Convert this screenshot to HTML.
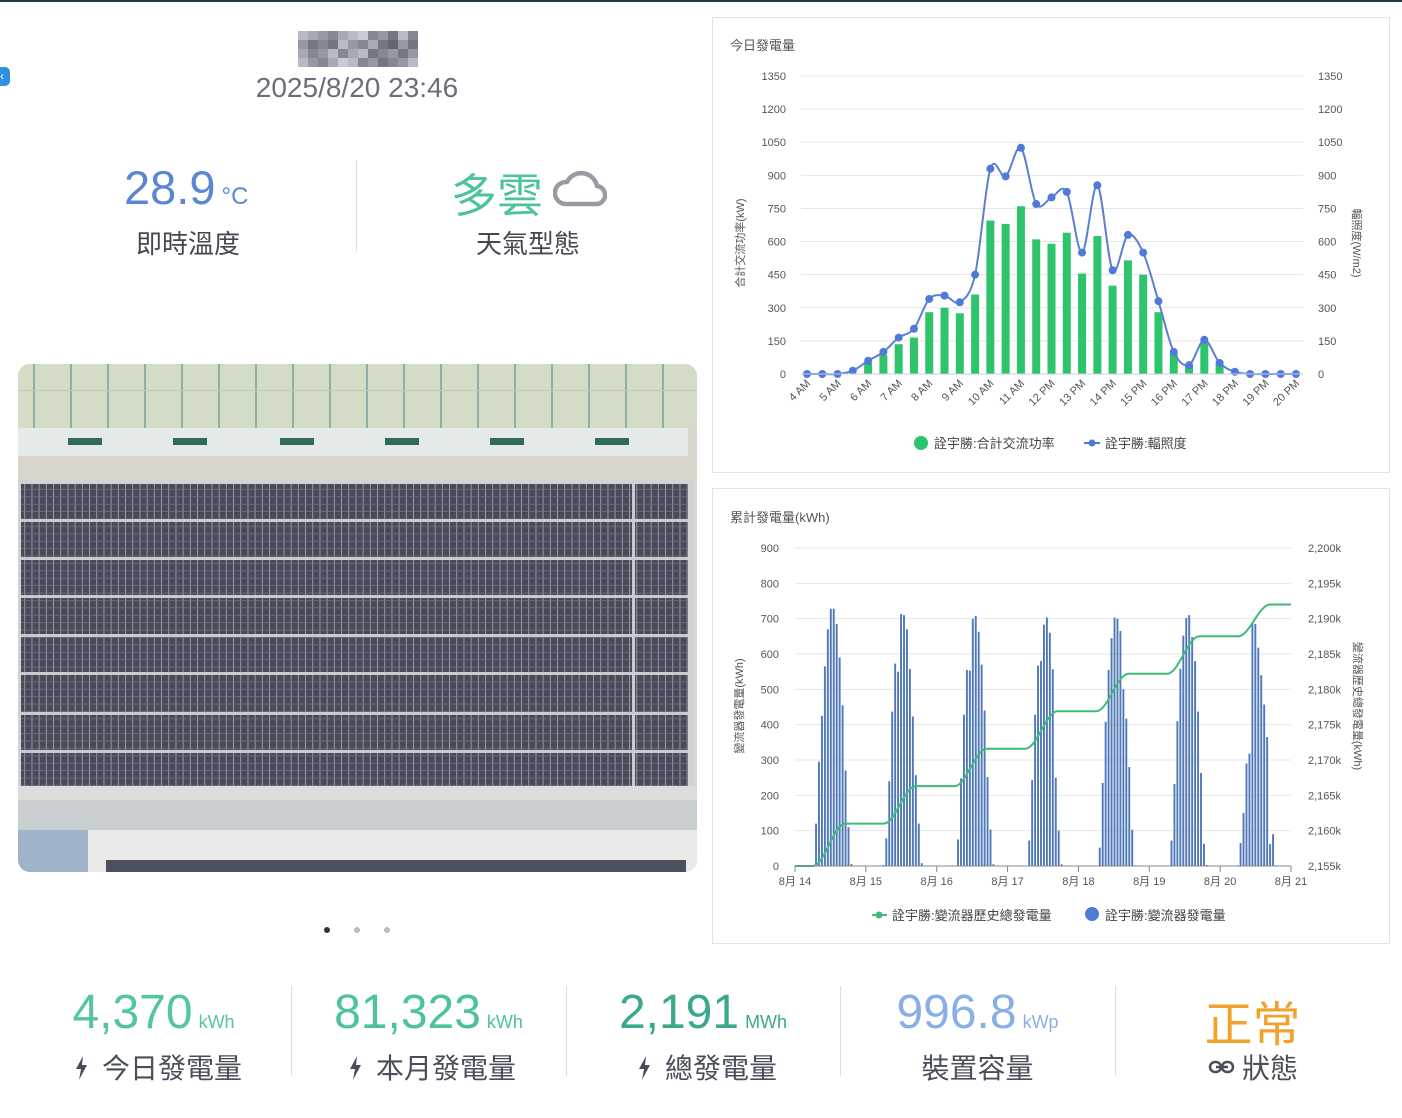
<!DOCTYPE html>
<html><head><meta charset="utf-8">
<style>
*{margin:0;padding:0;box-sizing:border-box}
body{width:1402px;height:1118px;background:#fff;font-family:"Liberation Sans","Noto Sans CJK TC",sans-serif;position:relative;overflow:hidden;color:#555}
.abs{position:absolute}
.card{position:absolute;border:1px solid #e3e3e3;background:#fff}
.t{position:absolute;white-space:nowrap}
</style></head><body>
<div class="abs" style="left:0;top:0;width:1402px;height:2px;background:#223c45"></div>
<div class="abs" style="left:0;top:67px;width:10px;height:19px;background:#2f8fe0;border-radius:0 5px 5px 0;color:#fff;font-size:12px;line-height:19px;text-align:left;padding-left:0px">‹</div>

<div id="blur" class="abs" style="left:298px;top:31px;width:120px;height:36px"></div>
<div class="t" style="left:0;width:714px;top:72px;text-align:center;font-size:28px;color:#6b6e7a">2025/8/20 23:46</div>

<div class="t" style="left:124px;top:160px;font-size:47px;color:#5b86d6">28.9<span style="font-size:24px;margin-left:6px">°C</span></div>
<div class="t" style="left:0;width:376px;top:224px;text-align:center;font-size:26px;color:#454851">即時溫度</div>
<div class="abs" style="left:356px;top:160px;width:1px;height:91px;background:#ddd"></div>
<div class="t" style="left:451px;top:160px;font-size:46px;color:#4cc39a">多雲</div>
<svg class="abs" style="left:553px;top:168px" width="54" height="40" viewBox="0 0 54 40"><path d="M12 36 H42 A9 9 0 0 0 44 18 A16 16 0 0 0 14 14 A11 11 0 0 0 12 36 Z" fill="none" stroke="#9a9aa2" stroke-width="4.5" stroke-linejoin="round"/></svg>
<div class="t" style="left:340px;width:376px;top:224px;text-align:center;font-size:26px;color:#454851">天氣型態</div>

<div class="abs" style="left:18px;top:364px;width:679px;height:508px;border-radius:12px;overflow:hidden"><svg id="photo" width="679" height="508"></svg></div>
<div class="abs" style="left:324px;top:927px;width:6px;height:6px;border-radius:3px;background:#333"></div>
<div class="abs" style="left:354px;top:927px;width:6px;height:6px;border-radius:3px;background:#bbb"></div>
<div class="abs" style="left:384px;top:927px;width:6px;height:6px;border-radius:3px;background:#bbb"></div>

<div class="card" style="left:712px;top:17px;width:678px;height:456px"><svg id="c1" width="678" height="456"></svg></div>
<div class="card" style="left:712px;top:488px;width:678px;height:456px"><svg id="c2" width="678" height="456"></svg></div>

<div class="abs" style="left:291px;top:986px;width:1px;height:90px;background:#ddd"></div>
<div class="abs" style="left:566px;top:986px;width:1px;height:90px;background:#ddd"></div>
<div class="abs" style="left:840px;top:986px;width:1px;height:90px;background:#ddd"></div>
<div class="abs" style="left:1115px;top:986px;width:1px;height:90px;background:#ddd"></div>

<div class="t" style="left:16px;width:275px;top:985px;text-align:center;font-size:48px;color:#55c4a0">4,370<span style="font-size:18px;margin-left:6px">kWh</span></div>
<div class="t" style="left:291px;width:275px;top:985px;text-align:center;font-size:48px;color:#4cc29d">81,323<span style="font-size:18px;margin-left:6px">kWh</span></div>
<div class="t" style="left:566px;width:274px;top:985px;text-align:center;font-size:48px;color:#3aa88a">2,191<span style="font-size:18px;margin-left:6px">MWh</span></div>
<div class="t" style="left:840px;width:275px;top:985px;text-align:center;font-size:48px;color:#8aaee6">996.8<span style="font-size:18px;margin-left:6px">kWp</span></div>
<div class="t" style="left:1115px;width:275px;top:985px;text-align:center;font-size:48px;color:#f0a22a">正常</div>

<svg class="abs" style="left:74px;top:1055px" width="16" height="26" viewBox="0 0 16 26"><path d="M9 1 L2 14 H7 L5 25 L13 10 H8 Z" fill="#4a4e5a"/></svg>
<div class="t" style="left:102px;top:1047px;font-size:28px;color:#4a4e5a">今日發電量</div>
<svg class="abs" style="left:348px;top:1055px" width="16" height="26" viewBox="0 0 16 26"><path d="M9 1 L2 14 H7 L5 25 L13 10 H8 Z" fill="#4a4e5a"/></svg>
<div class="t" style="left:376px;top:1047px;font-size:28px;color:#4a4e5a">本月發電量</div>
<svg class="abs" style="left:637px;top:1055px" width="16" height="26" viewBox="0 0 16 26"><path d="M9 1 L2 14 H7 L5 25 L13 10 H8 Z" fill="#4a4e5a"/></svg>
<div class="t" style="left:665px;top:1047px;font-size:28px;color:#4a4e5a">總發電量</div>
<div class="t" style="left:840px;width:275px;top:1047px;text-align:center;font-size:28px;color:#4a4e5a">裝置容量</div>
<svg class="abs" style="left:1208px;top:1058px" width="28" height="18" viewBox="0 0 28 18"><rect x="2" y="4" width="11" height="10" rx="5" fill="none" stroke="#4a4e5a" stroke-width="2.5"/><rect x="14" y="4" width="11" height="10" rx="5" fill="none" stroke="#4a4e5a" stroke-width="2.5"/><line x1="8" y1="9" x2="20" y2="9" stroke="#4a4e5a" stroke-width="2.5"/></svg>
<div class="t" style="left:1242px;top:1047px;font-size:28px;color:#4a4e5a">狀態</div>

<script>
var NS="http://www.w3.org/2000/svg";
function el(p,tag,a,txt){var e=document.createElementNS(NS,tag);for(var k in a)e.setAttribute(k,a[k]);if(txt!==undefined)e.textContent=txt;p.appendChild(e);return e;}
(function(){var b=document.getElementById('blur');var g=[
"ccbbaa99bbccdd99aa88cc99",
"aa889988ccaa99bb8877aa88",
"bb99aacc99bbcc8899aa88aa",
"ccaa99bbddcc99aa8899aacc"];
for(var r=0;r<4;r++)for(var c=0;c<12;c++){var h=g[r].substr(c*2,2);var v=parseInt(h,16);var d=document.createElement('div');d.style.cssText='position:absolute;left:'+c*10+'px;top:'+r*9+'px;width:10px;height:9px;background:rgb('+(v-20)+','+(v-18)+','+(v-5)+')';b.appendChild(d);}})();

(function(){var s=document.getElementById('photo');
el(s,'rect',{x:0,y:0,width:679,height:508,fill:'#d8d6cf'});
el(s,'rect',{x:0,y:0,width:679,height:64,fill:'#d3dcc6'});
for(var x=15;x<679;x+=37)el(s,'rect',{x:x,y:0,width:2,height:64,fill:'#8fb0a8'});
el(s,'rect',{x:0,y:26,width:679,height:1,fill:'#bfcab8'});
el(s,'rect',{x:0,y:64,width:670,height:28,fill:'#e6e9ea'});
[50,155,262,367,472,577].forEach(function(x){el(s,'rect',{x:x,y:74,width:34,height:7,fill:'#2f6a5a'});});
el(s,'rect',{x:0,y:92,width:679,height:24,fill:'#d9d6cc'});
el(s,'rect',{x:0,y:116,width:676,height:310,fill:'#d0d3d6'});
var d=el(s,'defs',{});var p=el(d,'pattern',{id:'cell',width:7.2,height:7.4,patternUnits:'userSpaceOnUse'});
el(p,'rect',{width:7.2,height:7.4,fill:'#464a59'});
el(p,'rect',{x:6.3,width:0.9,height:7.4,fill:'#9ea2ae'});el(p,'rect',{y:6.7,width:7.2,height:0.7,fill:'#737786'});
el(s,'rect',{x:3,y:120,width:667,height:302,fill:'url(#cell)'});
[155,193,231,270,308,348,386].forEach(function(y){el(s,'rect',{x:3,y:y,width:667,height:3,fill:'#c8cbd0'});});
el(s,'rect',{x:614,y:120,width:3,height:302,fill:'#c8cbd0'});
el(s,'rect',{x:0,y:422,width:679,height:14,fill:'#dcdcda'});
el(s,'rect',{x:0,y:436,width:679,height:30,fill:'#c9cfd0'});
el(s,'rect',{x:0,y:466,width:70,height:42,fill:'#9fb3c9'});
el(s,'rect',{x:70,y:466,width:609,height:42,fill:'#eaeae8'});
el(s,'rect',{x:88,y:496,width:580,height:12,fill:'#4b4f5e'});
})();

function smooth(pts){var d='M'+pts[0][0]+' '+pts[0][1];for(var i=0;i<pts.length-1;i++){var p0=pts[i-1]||pts[i],p1=pts[i],p2=pts[i+1],p3=pts[i+2]||p2;var t=0.16;d+=' C'+(p1[0]+(p2[0]-p0[0])*t)+' '+(p1[1]+(p2[1]-p0[1])*t)+' '+(p2[0]-(p3[0]-p1[0])*t)+' '+(p2[1]-(p3[1]-p1[1])*t)+' '+p2[0]+' '+p2[1];}return d;}

(function(){var s=document.getElementById('c1');var ox=712,oy=17;
el(s,'text',{x:17,y:32,'font-size':13,fill:'#555'},'今日發電量');
var y0=373-oy,k=298/1350;
for(var v=0;v<=1350;v+=150){var y=y0-v*k;el(s,'line',{x1:800-ox,x2:1302-ox,y1:y,y2:y,stroke:'#e6e6e6'});
el(s,'text',{x:785-ox,y:y+4,'font-size':11,fill:'#555','text-anchor':'end'},v);
el(s,'text',{x:1317-ox,y:y+4,'font-size':11,fill:'#555'},v);}
var irr=[0,0,0,15,60,100,165,205,340,355,325,450,930,895,1025,770,800,825,550,855,470,630,550,330,100,40,155,50,10,0,0,0,0];
var bar=[0,0,0,0,50,85,135,165,280,300,275,360,695,680,760,610,590,640,455,625,400,515,450,280,95,40,140,45,0,0,0,0,0];
var sp=(1295-806)/32;
for(var i=0;i<33;i++){var x=806-ox+i*sp;if(bar[i]>0)el(s,'rect',{x:x-4,y:y0-bar[i]*k,width:8,height:bar[i]*k,fill:'#2ec46b'});}
var pts=irr.map(function(v,i){return[806-ox+i*sp,y0-v*k];});
el(s,'path',{d:smooth(pts),fill:'none',stroke:'#5b80d0','stroke-width':2});
pts.forEach(function(p){el(s,'circle',{cx:p[0],cy:p[1],r:4,fill:'#4f7ad8'});});
el(s,'line',{x1:800-ox,x2:1302-ox,y1:y0,y2:y0,stroke:'#ccd'});
var lab=['4 AM','5 AM','6 AM','7 AM','8 AM','9 AM','10 AM','11 AM','12 PM','13 PM','14 PM','15 PM','16 PM','17 PM','18 PM','19 PM','20 PM'];
lab.forEach(function(l,i){var x=806-ox+i*2*sp+4,y=y0+10;el(s,'text',{x:x,y:y,'font-size':11,fill:'#555','text-anchor':'end',transform:'rotate(-45 '+x+' '+y+')'},l);});
el(s,'text',{x:31,y:225,'font-size':11,fill:'#555','text-anchor':'middle',transform:'rotate(-90 31 225)'},'合計交流功率(kW)');
el(s,'text',{x:640,y:225,'font-size':11,fill:'#555','text-anchor':'middle',transform:'rotate(90 640 225)'},'輻照度(W/m2)');
el(s,'circle',{cx:920-ox,cy:442-oy,r:7,fill:'#2ec46b'});
el(s,'text',{x:933-ox,y:447-oy,'font-size':13,fill:'#444'},'詮宇勝:合計交流功率');
el(s,'line',{x1:1083-ox,x2:1099-ox,y1:442-oy,y2:442-oy,stroke:'#4f7ad8','stroke-width':2});
el(s,'circle',{cx:1091-ox,cy:442-oy,r:3.5,fill:'#4f7ad8'});
el(s,'text',{x:1104-ox,y:447-oy,'font-size':13,fill:'#444'},'詮宇勝:輻照度');
})();

(function(){var s=document.getElementById('c2');var ox=712,oy=488;
el(s,'text',{x:17,y:33,'font-size':13,fill:'#555'},'累計發電量(kWh)');
var y0=865-oy,k=318/900,x0=794-ox,dw=(1290-794)/7,hw=dw/24;
var rl=['2,155k','2,160k','2,165k','2,170k','2,175k','2,180k','2,185k','2,190k','2,195k','2,200k'];
for(var i=0;i<=9;i++){var v=i*100,y=y0-v*k;if(i>0)el(s,'line',{x1:x0,x2:1290-ox,y1:y,y2:y,stroke:'#e6e6e6'});
el(s,'text',{x:778-ox,y:y+4,'font-size':11,fill:'#555','text-anchor':'end'},v);
el(s,'text',{x:1307-ox,y:y+4,'font-size':11,fill:'#555'},rl[i]);}
var prof=[[3,120,295,425,565,670,728,728,685,590,455,270,110,6],
[3,78,240,437,573,550,713,710,670,558,423,257,120,8],
[0,75,248,428,555,553,700,708,663,570,440,252,103,5],
[0,72,243,428,567,580,683,703,660,557,250,100,5,0],
[0,52,235,408,555,645,703,700,665,500,417,280,103,2],
[0,72,232,410,558,652,702,710,648,580,437,263,63,3],
[2,65,150,290,318,688,685,618,540,457,365,62,90,2]];
var starts=[5.8,5.6,5.9,6.0,5.9,6.2,5.6];
prof.forEach(function(p,d){p.forEach(function(v,h){if(v<=0)return;var x=x0+d*dw+(starts[d]+h)*hw;el(s,'rect',{x:x,y:y0-v*k,width:1.9,height:v*k,fill:'#4f78b8'});});});
var lv=[2155,2161,2166.3,2171.6,2176.9,2182.2,2187.5,2192];var pts=[];
for(var d=0;d<7;d++){for(var h=0;h<24;h+=0.5){var f=h<6?0:h>17?1:(1-Math.cos(Math.PI*(h-6)/11))/2;var v=lv[d]+(lv[d+1]-lv[d])*f;pts.push((x0+d*dw+h*hw).toFixed(1)+','+(y0-(v-2155)*318/45).toFixed(1));}}
pts.push((1290-ox)+','+(y0-(2192-2155)*318/45).toFixed(1));
el(s,'polyline',{points:pts.join(' '),fill:'none',stroke:'#3dbb78','stroke-width':2});
el(s,'line',{x1:x0,x2:1290-ox,y1:y0,y2:y0,stroke:'#888'});
for(var d=0;d<=7;d++){var x=x0+d*dw;el(s,'line',{x1:x,x2:x,y1:y0,y2:y0+6,stroke:'#888'});
el(s,'text',{x:x,y:y0+19,'font-size':11,fill:'#555','text-anchor':'middle'},'8月 '+(14+d));}
el(s,'text',{x:30,y:217,'font-size':11,fill:'#555','text-anchor':'middle',transform:'rotate(-90 30 217)'},'變流器發電量(kWh)');
el(s,'text',{x:641,y:217,'font-size':11,fill:'#555','text-anchor':'middle',transform:'rotate(90 641 217)'},'變流器歷史總發電量(kWh)');
el(s,'line',{x1:871-ox,x2:886-ox,y1:914-oy,y2:914-oy,stroke:'#3dbb78','stroke-width':2});
el(s,'circle',{cx:878-ox,cy:914-oy,r:3.5,fill:'#3dbb78'});
el(s,'text',{x:891-ox,y:919-oy,'font-size':13,fill:'#444'},'詮宇勝:變流器歷史總發電量');
el(s,'circle',{cx:1091-ox,cy:913-oy,r:7,fill:'#4f7ad8'});
el(s,'text',{x:1104-ox,y:919-oy,'font-size':13,fill:'#444'},'詮宇勝:變流器發電量');
})();
</script>
</body></html>
